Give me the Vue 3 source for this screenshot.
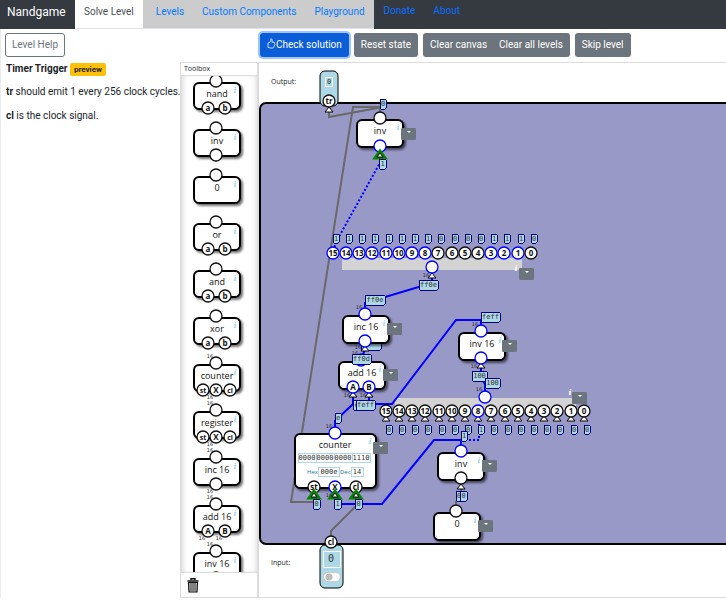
<script setup>
import { ref } from 'vue'

const tools = [
  { name: 'nand', pins: [['a', 27], ['b', 44]] },
  { name: 'inv', pins: [['', 35]] },
  { name: '0', pins: [] },
  { name: 'or', pins: [['a', 27], ['b', 44]] },
  { name: 'and', pins: [['a', 27], ['b', 44]] },
  { name: 'xor', pins: [['a', 27], ['b', 44]] },
  { name: 'counter', wide: true, pins: [['st', 22], ['X', 35], ['cl', 49]], wideIn: [29] },
  { name: 'register', wide: true, pins: [['st', 22], ['X', 35], ['cl', 49]], wideIn: [29] },
  { name: 'inc 16', wide: true, pins: [['', 35]], wideIn: [29] },
  { name: 'add 16', wide: true, pins: [['A', 27], ['B', 44]], wideIn: [21, 38] },
  { name: 'inv 16', wide: true, pins: [['', 35]] },
]

const bitX = [333, 346, 359, 372, 386, 399, 412, 425, 438, 452, 465, 478, 491, 504, 518, 531]
const splitTop = '1111111100001110'.split('').map((v, i) => ({ v, n: 15 - i, x: bitX[i] }))
const splitBottom = '0000000100000000'.split('').map((v, i) => ({ v, n: 15 - i, x: bitX[i] + 53 }))

const nodes = [
  { name: 'inv', x: 357, y: 120 },
  { name: 'inc 16', x: 343, y: 316 },
  { name: 'add 16', x: 339, y: 362 },
  { name: 'inv 16', x: 459, y: 333 },
  { name: 'inv', x: 438, y: 453 },
  { name: '0', x: 434, y: 513 },
]

const pins = [
  { x: 380, y: 118 },
  { x: 380, y: 146, on: true },
  { x: 432, y: 267, on: true },
  { x: 365, y: 314, on: true },
  { x: 365, y: 341, on: true },
  { x: 353, y: 387, on: true, t: 'A' },
  { x: 369, y: 387, on: true, t: 'B' },
  { x: 481, y: 331, on: true },
  { x: 481, y: 358, on: true },
  { x: 485, y: 397, on: true },
  { x: 461, y: 451, on: true },
  { x: 461, y: 478 },
  { x: 456, y: 511 },
  { x: 335, y: 433, on: true },
  { x: 314, y: 487, t: 'st' },
  { x: 335, y: 487, on: true, t: 'X' },
  { x: 356, y: 487, t: 'cl' },
]

const arrows = [[329, 110], [432, 276], [365, 349], [353, 395], [369, 395], [481, 366], [461, 487]]
const greenArrows = [[380, 155], [314, 495], [335, 495], [356, 495]]

const values = [
  { t: '0', x: 380, y: 99, w: 6 },
  { t: '1', x: 379, y: 159, w: 7 },
  { t: 'ff0e', x: 419, y: 280, w: 19 },
  { t: 'ff0e', x: 365, y: 295, w: 20 },
  { t: 'ff0d', x: 352, y: 354, w: 19 },
  { t: 'e', x: 353, y: 400, w: 7 },
  { t: 'feff', x: 356, y: 400, w: 19 },
  { t: 'e', x: 335, y: 413, w: 6 },
  { t: 'feff', x: 481, y: 312, w: 19 },
  { t: '100', x: 472, y: 371, w: 15 },
  { t: '100', x: 485, y: 378, w: 15 },
  { t: '1', x: 461, y: 431, w: 6 },
  { t: '0', x: 456, y: 491, w: 6 },
  { t: '0', x: 460, y: 491, w: 7 },
  { t: '0', x: 313, y: 499, w: 7 },
  { t: '1', x: 334, y: 499, w: 7 },
  { t: '0', x: 355, y: 499, w: 7 },
]

const widths = [
  [426, 277], [359, 309], [358, 349], [355, 355], [347, 397], [363, 397],
  [475, 326], [474, 368], [479, 391], [329, 428], [329, 497],
]

const menus = [
  [401, 128], [519, 268], [387, 323], [383, 369], [502, 340],
  [572, 392], [373, 442], [482, 460], [478, 520],
]

const place = (x, y) => ({ left: x - 259 + 'px', top: y - 63 + 'px' })

const hex = ref('000e')
const dec = ref('14')
const clock = ref(false)
</script>

<template>
  <div class="page">
    <header class="bar">
      <a class="brand" href="#">Nandgame</a>
      <nav class="tabs">
        <a class="tab current" href="#solve">Solve Level</a>
        <a class="tab" href="#levels">Levels</a>
        <a class="tab" href="#custom">Custom Components</a>
        <a class="tab" href="#playground">Playground</a>
      </nav>
      <nav class="links">
        <a href="#donate">Donate</a>
        <a href="#about">About</a>
      </nav>
    </header>

    <div class="toolbar">
      <div class="help">
        <button class="btn outline" type="button">Level Help</button>
      </div>
      <div class="actions">
        <button class="btn primary" type="button">
          <svg width="9" height="11" viewBox="0 0 9 11" aria-hidden="true">
            <path d="M1 5 L3 4.2 C3.9 3.2 3.6 1.8 3.9 .8 C5.2 .6 5.4 2.4 4.9 4.2 H7 C8 4.3 8 5.3 7.6 5.6 C8.1 6.1 7.9 6.9 7.5 7.1 C7.7 7.8 7.4 8.4 7 8.5 C7 9.6 6.4 10 5.5 10 H3.4 L1 9.3 Z" />
          </svg>Check solution
        </button>
        <button class="btn" type="button">Reset state</button>
        <div class="group">
          <button class="btn" type="button">Clear canvas</button>
          <button class="btn" type="button">Clear all levels</button>
        </div>
        <button class="btn" type="button">Skip level</button>
      </div>
    </div>

    <main class="work">
      <section class="info">
        <h1>Timer Trigger <span class="badge">preview</span></h1>
        <p><b>tr</b> should emit 1 every 256 clock cycles.</p>
        <p><b>cl</b> is the clock signal.</p>
      </section>

      <aside class="toolbox">
        <h2>Toolbox</h2>
        <ul>
          <li v-for="t in tools" :key="t.name">
            <svg class="tool" width="76" height="47">
              <rect class="tool-box" x="13" y="7" width="46" height="26" rx="5" />
              <circle class="pin" cx="35" cy="5" r="6" />
              <text class="name" x="36" y="21">{{ t.name }}</text>
              <text class="hint" x="54" y="17">i</text>
              <g v-for="p in t.pins" :key="p[1]">
                <circle class="pin" :cx="p[1]" cy="32" r="6" />
                <text class="pin-name" :class="{ pair: p[0].length > 1 }" :x="p[1]" y="35">{{ p[0] }}</text>
              </g>
              <text v-if="t.wide" class="width" x="29" y="0">16</text>
              <text v-for="x in t.wideIn" :key="x" class="width" :x="x" y="41">16</text>
            </svg>
          </li>
        </ul>
        <div class="bin">
          <button type="button" aria-label="Delete">
            <svg width="12" height="15" viewBox="0 0 12 15">
              <path d="M4 2 V.8 H8 V2 M.5 3 H11.5" fill="none" stroke="#111" stroke-width="1.4" />
              <path d="M1.5 4.5 H10.5 L10 14 H2 Z" fill="#ccc" stroke="#111" stroke-width="1.2" />
              <path d="M4 5 V13 M6 5 V13 M8 5 V13" stroke="#111" stroke-width=".8" />
            </svg>
          </button>
        </div>
      </aside>

      <section class="canvas">
        <div class="output">Output:</div>
        <div class="board"></div>
        <div class="input">Input:</div>

        <svg class="diagram" width="100%" height="100%">
          <g transform="translate(-259 -63)">
            <rect class="io" x="320" y="71" width="18" height="35" rx="5" />
            <rect class="io" x="320" y="545" width="23" height="43" rx="5" />

            <g class="wire off">
              <path d="M329 110 V117 L383 107" />
              <path d="M380 112 V107 H353 L291 502 H316" />
              <path d="M357 505 L331 531 V541" />
              <path d="M461 487 V494 L456 502 V511" />
            </g>

            <rect class="strip" x="342" y="258" width="180" height="12" />
            <rect class="strip" x="395" y="398" width="181" height="12" />

            <g class="wire on">
              <path d="M432 276 V283 L365 303 V314" />
              <path d="M365 349 L362 358 V362" />
              <path d="M353 395 V404 L335 421 V433" />
              <path d="M369 395 V404 H392 L456 320 H481 V331" />
              <path d="M481 366 V378 L485 384 V397" />
              <path d="M461 449 V440 H434 L382 504 H338" />
              <path class="dots" d="M381 161 L336 242 L333 252" />
              <path class="dots" d="M479 420 V440 H463" />
            </g>

            <g class="value">
              <rect x="361" y="341" width="20" height="9" rx="1" />
              <g v-for="b in splitTop" :key="'t' + b.n">
                <rect :x="b.x" y="234" width="6" height="9" rx="1" />
                <text :x="b.x + 3" y="241">{{ b.v }}</text>
              </g>
              <g v-for="b in splitBottom" :key="'b' + b.n">
                <rect :x="b.x" y="425" width="6" height="9" rx="1" />
                <text :x="b.x + 3" y="432">{{ b.v }}</text>
              </g>
            </g>

            <g v-for="(n, i) in nodes" :key="'n' + i">
              <rect class="node" :x="n.x" :y="n.y" width="46" height="27" rx="5" />
              <text class="name" :x="n.x + 23" :y="n.y + 14">{{ n.name }}</text>
              <text class="hint" :x="n.x + 41" :y="n.y + 10">i</text>
            </g>
            <circle class="pin lit" cx="361" cy="360" r="6" />

            <rect class="node" x="295" y="434" width="81" height="54" rx="5" />
            <text class="name" x="335" y="448">counter</text>
            <text class="hint" x="370" y="444">i</text>
            <g v-for="(b, i) in ['0000', '0000', '0000', '1110']" :key="'w' + i">
              <rect class="cell" :x="298 + i * 18" y="453" width="18" height="9" />
              <text class="mono" :x="307 + i * 18" y="460">{{ b }}</text>
            </g>

            <path v-for="a in arrows" :key="'a' + a" class="arrow" :d="`M${a[0]} ${a[1] - 3} l4 5 h-8 Z`" />
            <path v-for="b in splitBottom" :key="'sa' + b.n" class="arrow" :d="`M${b.x} 416 l4 5 h-8 Z`" />

            <g v-for="b in splitTop" :key="'tc' + b.n">
              <circle class="pin" :class="{ lit: b.v === '1' }" :cx="b.x" cy="253" r="6" />
              <text class="bit" :x="b.x" y="256">{{ b.n }}</text>
            </g>
            <g v-for="b in splitBottom" :key="'bc' + b.n">
              <circle class="pin" :class="{ lit: b.v === '1' }" :cx="b.x" cy="411" r="6" />
              <text class="bit" :x="b.x" y="414">{{ b.n }}</text>
            </g>

            <g v-for="(p, i) in pins" :key="'p' + i">
              <circle class="pin" :class="{ lit: p.on }" :cx="p.x" :cy="p.y" r="6" />
              <text class="pin-name" :x="p.x" :y="p.y + 3">{{ p.t }}</text>
            </g>
            <g v-for="a in greenArrows" :key="'g' + a">
              <path class="green" :d="`M${a[0]} ${a[1] - 4} l5 7 h-10 Z`" />
              <path class="arrow" :d="`M${a[0]} ${a[1] - 2} l3 4 h-6 Z`" />
            </g>

            <circle class="pin" cx="329" cy="101" r="6" />
            <text class="pin-name" x="329" y="104">tr</text>
            <circle class="pin" cx="331" cy="542" r="6" />
            <text class="pin-name" x="331" y="545">cl</text>
            <rect class="frame" x="325" y="77" width="7" height="9" />
            <text class="mono" x="329" y="84">0</text>
            <rect class="frame" x="323" y="551" width="17" height="16" />
            <text class="mono big" x="331" y="562">0</text>

            <text v-for="w in widths" :key="'k' + w" class="width" :x="w[0]" :y="w[1]">16</text>

            <g class="value">
              <g v-for="(v, i) in values" :key="'v' + i">
                <rect :x="v.x" :y="v.y" :width="v.w" height="10" rx="1" />
                <text :x="v.x + v.w / 2" :y="v.y + 7">{{ v.t }}</text>
              </g>
            </g>
            <text class="hint light" x="516" y="271">i</text>
            <text class="hint light" x="570" y="395">i</text>
          </g>
        </svg>

        <div class="registers" :style="place(307, 466)">
          <label for="hex">Hex</label>
          <input id="hex" v-model="hex" class="hex" />
          <label for="dec">Dec</label>
          <input id="dec" v-model="dec" class="dec" />
        </div>
        <input
          v-model="clock"
          class="switch"
          type="checkbox"
          aria-label="cl"
          :style="place(323, 572)"
        />
        <button
          v-for="m in menus"
          :key="'m' + m"
          class="menu"
          type="button"
          aria-label="Menu"
          :style="place(m[0], m[1])"
        ></button>
      </section>
    </main>
  </div>
</template>

<style>
body {
  background: #fff;
}
</style>

<style scoped>
* {
  box-sizing: border-box;
}
.page {
  font: 10px/15px Roboto, sans-serif;
  color: #212529;
  overflow: hidden;
}
a {
  text-decoration: none;
}
button,
input {
  font: inherit;
  margin: 0;
}
.bar {
  display: flex;
  height: 29px;
  background: #343a40;
}
.brand {
  width: 75px;
  padding-left: 7px;
  font-size: 12px;
  line-height: 24px;
  color: #fff;
}
.tabs {
  display: flex;
  background: #ccc;
  border-bottom: 1px solid #dee2e6;
}
.tab {
  padding: 0 9px;
  line-height: 24px;
  color: #007bff;
}
.tab.current {
  margin-right: 4px;
  background: #fff;
  color: #495057;
}
.links {
  display: flex;
  gap: 18px;
  padding-left: 10px;
  line-height: 22px;
}
.links a {
  color: #0d6efd;
}
.toolbar {
  display: flex;
  height: 33px;
  padding-top: 4px;
  border-left: 1px solid #e9ecef;
}
.help {
  width: 259px;
  padding-left: 4px;
}
.actions {
  display: flex;
  align-items: flex-start;
  gap: 5px;
}
.btn {
  height: 24px;
  padding: 0 7px;
  border: 0;
  border-radius: 3px;
  background: #6c757d;
  color: #fff;
  line-height: 22px;
  white-space: nowrap;
}
.outline {
  width: 60px;
  border: 1px solid #6c757d;
  background: #fff;
  color: #6c757d;
  padding: 0;
}
.primary {
  background: #0b5ed7;
  box-shadow: 0 0 0 2px #9ec5fe;
}
.primary svg {
  vertical-align: -1px;
  fill: none;
  stroke: #fff;
  stroke-width: 0.8;
}
.group {
  display: flex;
}
.group .btn:first-child {
  padding-right: 6px;
  border-radius: 3px 0 0 3px;
}
.group .btn:last-child {
  padding-left: 6px;
  border-radius: 0 3px 3px 0;
}
.work {
  display: grid;
  grid-template-columns: 180px 78px minmax(0, 1fr);
}
.info {
  padding: 0 0 0 5px;
  border-left: 1px solid #e9ecef;
}
h1 {
  margin: 0 0 8px;
  font-size: 10px;
  line-height: 13px;
  font-weight: 700;
}
.badge {
  display: inline-block;
  padding: 0 4px;
  border-radius: 2px;
  background: #ffc107;
  font-size: 8px;
}
.info p {
  margin: 0 0 9px;
  white-space: nowrap;
}
.toolbox {
  display: flex;
  flex-direction: column;
  height: 536px;
  border: 1px solid #dcdcdc;
}
h2 {
  margin: 0;
  padding-left: 3px;
  border-bottom: 1px solid #dcdcdc;
  font: 400 7px/12px "Open Sans", sans-serif;
}
.toolbox ul {
  flex: 1;
  min-height: 0;
  margin: 0;
  padding: 0;
  list-style: none;
  overflow: hidden;
  box-shadow: inset 5px 0 6px -4px #ccc, inset -5px 0 6px -4px #ddd;
}
.toolbox li {
  height: 47px;
}
.tool {
  display: block;
  overflow: visible;
}
.bin {
  height: 25px;
  padding: 5px 6px;
  border-top: 1px solid #dcdcdc;
}
.bin button {
  display: block;
  padding: 0;
  border: 0;
  background: none;
}
.bin svg {
  display: block;
}
.canvas {
  position: relative;
  display: flex;
  flex-direction: column;
  border: solid #dcdcdc;
  border-width: 1px 0 1px 1px;
  font: 7px/12px "Open Sans", sans-serif;
  overflow: hidden;
}
.output {
  height: 39px;
  padding: 13px 12px;
}
.board {
  height: 443px;
  margin-right: -8px;
  border: 2px solid #000;
  border-radius: 7px;
  background: #9999c8;
}
.input {
  padding: 12px;
}
.diagram {
  position: absolute;
  left: 0;
  top: 0;
}
text {
  text-anchor: middle;
  fill: #212529;
}
.name {
  font: 500 9px "Open Sans", sans-serif;
  fill: #111;
}
.pin-name {
  font: 700 8px "Open Sans", sans-serif;
  fill: #111;
}
.pin-name.pair {
  font-size: 7px;
}
.bit {
  font: 700 8px "Open Sans", sans-serif;
  fill: #111;
}
.width {
  font: 5px "DejaVu Sans", sans-serif;
}
.hint {
  font: italic 700 8px "DejaVu Serif", serif;
  fill: #a5dbee;
}
.hint.light {
  fill: #fff;
}
.mono,
.value text {
  font: 7px "DejaVu Sans Mono", monospace;
  fill: #333;
}
.mono.big {
  font-size: 10px;
}
.tool-box,
.node {
  fill: #fff;
  stroke: #000;
  stroke-width: 2;
  filter: drop-shadow(2px 2px 1px rgba(0, 0, 0, 0.55));
}
.pin {
  fill: #fff;
  stroke: #111;
  stroke-width: 1.3;
}
.pin.lit {
  stroke: #00f;
}
.io {
  fill: #add8e6;
  stroke: #000;
}
.strip {
  fill: #d3d3d3;
}
.wire path {
  fill: none;
  stroke-width: 2;
}
.wire.off path {
  stroke: #696969;
}
.wire.on path {
  stroke: #00f;
}
.wire.on .dots {
  stroke-dasharray: 2 2;
}
.value rect {
  fill: #add8e6;
  stroke: #000080;
  shape-rendering: crispEdges;
}
.cell {
  fill: #fff;
  stroke: #add8e6;
  shape-rendering: crispEdges;
}
.frame {
  fill: none;
  stroke: #fff;
  shape-rendering: crispEdges;
}
.arrow {
  fill: #fff;
  stroke: #000;
}
.green {
  fill: #080;
  stroke: #080;
  stroke-width: 3;
}
.registers {
  position: absolute;
  display: flex;
  align-items: center;
  height: 11px;
  font-size: 6px;
  color: #1b7a8f;
}
.registers input {
  height: 10px;
  padding: 0;
  border: 1px solid #add8e6;
  font: 7px "DejaVu Sans Mono", monospace;
  text-align: center;
  color: #333;
}
.hex {
  width: 22px;
}
.dec {
  width: 13px;
}
.switch {
  position: absolute;
  appearance: none;
  width: 18px;
  height: 10px;
  border: 1px solid #ccc;
  border-radius: 5px;
  background: radial-gradient(circle at 5px 4px, #bbb 3px, #fff 4px);
}
.menu {
  position: absolute;
  display: flex;
  justify-content: center;
  width: 15px;
  height: 12px;
  padding: 3px 0 0;
  border: 0;
  border-radius: 1px;
  background: #6c757d;
}
.menu::after {
  content: "";
  border: 2px solid transparent;
  border-top-color: #fff;
  border-bottom: 0;
}
</style>
